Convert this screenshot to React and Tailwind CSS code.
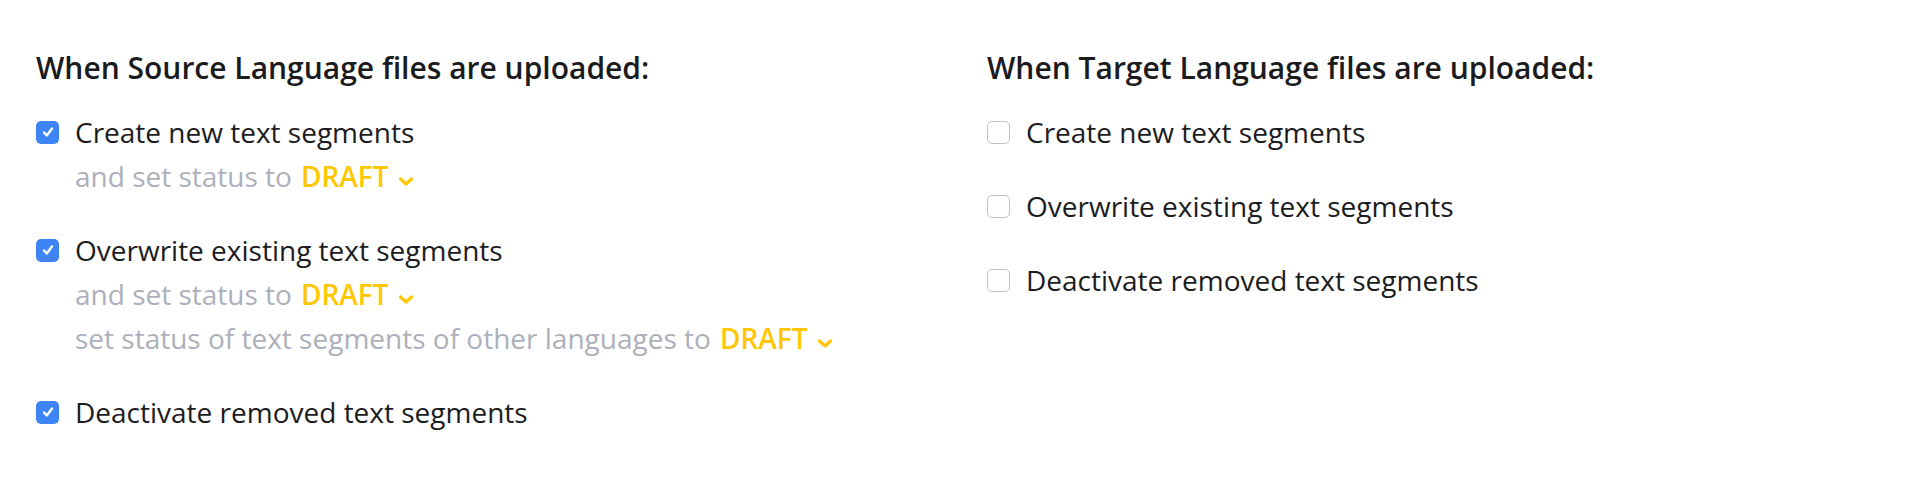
import React, { useState } from "react";

const Chevron = () => (
  <svg
    viewBox="0 0 16 10"
    className="w-[16px] h-[11px] ml-[9px] translate-y-[5px]"
    fill="none"
    stroke="#ffc700"
    strokeWidth="3.2"
    strokeLinecap="round"
    strokeLinejoin="round"
  >
    <path d="M2.5 2.5 L8 7.5 L13.5 2.5" />
  </svg>
);

const Status = ({ label }) => (
  <div className="h-[44px] flex items-center pl-[39px] text-[28px] text-[#adb0ba]">
    <span>{label}</span>
    <span className="ml-[9px] font-semibold text-[#ffc700]">DRAFT</span>
    <Chevron />
  </div>
);

const Checkbox = ({ checked, onChange }) => (
  <button
    onClick={onChange}
    className={
      checked
        ? "w-[23px] h-[23px] rounded-[5px] bg-[#3e84f7] flex items-center justify-center shrink-0"
        : "w-[23px] h-[23px] rounded-[5px] bg-white border-[1.5px] border-[#c3c3c6] shrink-0"
    }
  >
    {checked && (
      <svg viewBox="0 0 16 16" className="w-[16px] h-[16px]" fill="none" stroke="white" strokeWidth="2.4" strokeLinecap="round" strokeLinejoin="round">
        <path d="M4 8.5 L6.8 11.5 L12 4.5" />
      </svg>
    )}
  </button>
);

const Option = ({ label, checked, onChange, children }) => (
  <div className="flex flex-col">
    <label className="h-[44px] flex items-center gap-[16px] text-[28px] text-[#1c1c1e] cursor-pointer">
      <Checkbox checked={checked} onChange={onChange} />
      <span>{label}</span>
    </label>
    {checked && children}
  </div>
);

const App = () => {
  const [source, setSource] = useState({ create: true, overwrite: true, deactivate: true });
  const [target, setTarget] = useState({ create: false, overwrite: false, deactivate: false });

  const toggle = (setter, key) => setter((s) => ({ ...s, [key]: !s[key] }));

  return (
    <div className="w-[1930px] h-[478px] bg-white flex pt-[50px] pl-[36px]" style={{ fontFamily: '"Open Sans", sans-serif' }}>
      <div className="w-[951px] flex flex-col">
        <h2 className="h-[36px] leading-[36px] text-[30px] font-semibold text-[#1b1b1d] mb-[24px]">
          When Source Language files are uploaded:
        </h2>
        <div className="flex flex-col gap-[30px]">
          <Option label="Create new text segments" checked={source.create} onChange={() => toggle(setSource, "create")}>
            <Status label="and set status to" />
          </Option>
          <Option label="Overwrite existing text segments" checked={source.overwrite} onChange={() => toggle(setSource, "overwrite")}>
            <Status label="and set status to" />
            <Status label="set status of text segments of other languages to" />
          </Option>
          <Option label="Deactivate removed text segments" checked={source.deactivate} onChange={() => toggle(setSource, "deactivate")} />
        </div>
      </div>
      <div className="flex-1 flex flex-col">
        <h2 className="h-[36px] leading-[36px] text-[30px] font-semibold text-[#1b1b1d] mb-[24px]">
          When Target Language files are uploaded:
        </h2>
        <div className="flex flex-col gap-[30px]">
          <Option label="Create new text segments" checked={target.create} onChange={() => toggle(setTarget, "create")} />
          <Option label="Overwrite existing text segments" checked={target.overwrite} onChange={() => toggle(setTarget, "overwrite")} />
          <Option label="Deactivate removed text segments" checked={target.deactivate} onChange={() => toggle(setTarget, "deactivate")} />
        </div>
      </div>
    </div>
  );
};

export default App;
